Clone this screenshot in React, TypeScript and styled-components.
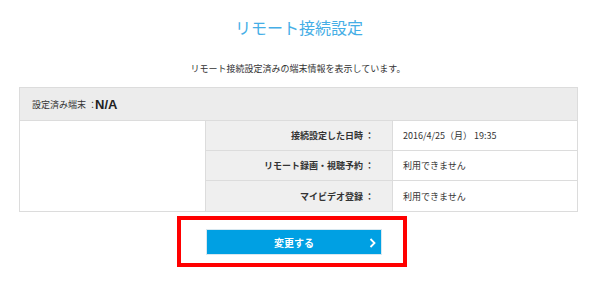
import React from 'react';
import styled, { createGlobalStyle } from 'styled-components';

const borderColor = '#dcdcdc';

const GlobalStyle = createGlobalStyle`
  body {
    margin: 0;
    background: #ffffff;
    font-family: "Noto Sans CJK JP", "Noto Sans", sans-serif;
    color: #333333;
  }
`;

const Page = styled.div`
  width: 600px;
  height: 300px;
  padding-top: 17px;
  box-sizing: border-box;
  display: flex;
  flex-direction: column;
`;

const Title = styled.h1`
  margin: 0;
  font-size: 16px;
  line-height: 20px;
  font-weight: 400;
  color: #45aee6;
  text-align: center;
  padding-right: 2px;
`;

const Lead = styled.p`
  margin: 26px 0 0;
  font-size: 9px;
  line-height: 12px;
  text-align: center;
  color: #333333;
  padding-right: 4px;
`;

const InfoTable = styled.div`
  margin: 12px 0 0 19px;
  width: 559px;
  box-sizing: border-box;
  border: 1px solid ${borderColor};
  display: grid;
  grid-template-columns: 186px 187px 1fr;
  grid-template-rows: 33px 30px 30px 30px;
`;

const HeaderRow = styled.div`
  grid-column: 1 / -1;
  background: #ececec;
  border-bottom: 1px solid ${borderColor};
  display: flex;
  align-items: center;
  padding-left: 12px;
  font-size: 9px;
`;

const DeviceName = styled.span`
  font-family: "Liberation Sans", Arial, sans-serif;
  font-weight: 700;
  font-size: 13px;
  color: #222222;
  margin-left: -2px;
`;

const BlankCell = styled.div`
  grid-row: 2 / span 3;
  background: #ffffff;
  border-right: 1px solid ${borderColor};
`;

const LabelCell = styled.div<{ $last?: boolean }>`
  background: #efefef;
  border-right: 1px solid ${borderColor};
  border-bottom: ${(p) => (p.$last ? 'none' : `1px solid ${borderColor}`)};
  display: flex;
  align-items: center;
  justify-content: flex-end;
  padding-right: 18px;
  font-size: 9px;
  font-weight: 700;
  color: #333333;
`;

const ValueCell = styled.div<{ $last?: boolean }>`
  background: #ffffff;
  border-bottom: ${(p) => (p.$last ? 'none' : `1px solid ${borderColor}`)};
  display: flex;
  align-items: center;
  padding-left: 10px;
  font-size: 9px;
  color: #333333;
`;

const Highlight = styled.div`
  margin: 4px 0 0 177px;
  width: 230px;
  height: 51px;
  box-sizing: border-box;
  border: 4px solid #ff0000;
  padding: 9px 21px 0 25px;
`;

const ChangeButton = styled.button`
  position: relative;
  width: 176px;
  height: 26px;
  border: 1px solid #d8e8f0;
  background: #00a0e3;
  color: #ffffff;
  font-family: "Noto Sans CJK JP", "Noto Sans", sans-serif;
  font-size: 10px;
  font-weight: 700;
  padding: 0;
  cursor: pointer;
  display: flex;
  align-items: center;
  justify-content: center;
`;

const Chevron = styled.svg`
  position: absolute;
  right: 5px;
  top: 8px;
`;

const rows = [
  { label: '接続設定した日時 ：', value: '2016/4/25（月） 19:35' },
  { label: 'リモート録画・視聴予約 ：', value: '利用できません' },
  { label: 'マイビデオ登録 ：', value: '利用できません' },
];

const App: React.FC = () => {
  return (
    <Page>
      <GlobalStyle />
      <Title>リモート接続設定</Title>
      <Lead>リモート接続設定済みの端末情報を表示しています。</Lead>
      <InfoTable>
        <HeaderRow>
          設定済み端末 ：<DeviceName>N/A</DeviceName>
        </HeaderRow>
        <BlankCell />
        {rows.map((row, i) => (
          <React.Fragment key={row.label}>
            <LabelCell $last={i === rows.length - 1}>{row.label}</LabelCell>
            <ValueCell $last={i === rows.length - 1}>{row.value}</ValueCell>
          </React.Fragment>
        ))}
      </InfoTable>
      <Highlight>
        <ChangeButton type="button">
          変更する
          <Chevron width="7" height="10" viewBox="0 0 7 10">
            <path d="M1.5 1 L5.5 5 L1.5 9" fill="none" stroke="#ffffff" strokeWidth="1.8" />
          </Chevron>
        </ChangeButton>
      </Highlight>
    </Page>
  );
};

export default App;
